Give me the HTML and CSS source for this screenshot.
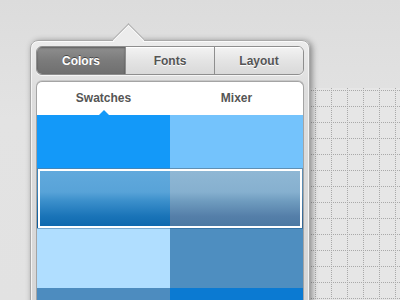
FILE: index.html
```html
<!DOCTYPE html>
<html lang="en">
<head>
    <meta charset="UTF-8">
    <meta name="viewport" content="width=device-width, initial-scale=1.0">
    <title>Color Picker</title>
    <link rel="stylesheet" href="styles.css">
</head>
<body>

<div class="desk">
    <div class="canvas">
        <svg class="grid" width="100%" height="100%">
            <defs>
                <pattern id="dots" x="9" y="2" width="16" height="16" patternUnits="userSpaceOnUse">
                    <path d="M0 0.5H16M0.5 0V16" stroke="#a9a9a9" stroke-width="1" stroke-dasharray="1 1" fill="none"/>
                </pattern>
            </defs>
            <rect width="100%" height="100%" fill="url(#dots)"/>
        </svg>
    </div>

    <div class="popover">
        <div class="segmented">
            <div class="seg active">Colors</div>
            <div class="seg">Fonts</div>
            <div class="seg">Layout</div>
        </div>

        <div class="picker">
            <div class="tabs">
                <div class="tab active">Swatches</div>
                <div class="tab">Mixer</div>
            </div>
            <div class="swatches">
                <div class="row first">
                    <div class="swatch" style="background:#1399f9"></div>
                    <div class="swatch" style="background:#74c3fc"></div>
                </div>
                <div class="row selected">
                    <div class="swatch sel-left"></div>
                    <div class="swatch sel-right"></div>
                </div>
                <div class="row">
                    <div class="swatch" style="background:#b0deff"></div>
                    <div class="swatch" style="background:#4e8ec0"></div>
                </div>
                <div class="row">
                    <div class="swatch" style="background:#4d8cbf"></div>
                    <div class="swatch" style="background:#0b7ad2"></div>
                </div>
            </div>
        </div>
    </div>
</div>

</body>
</html>
```

FILE: styles.css
```css
body {
    margin: 0;
    background: #e1e1e1;
    font-family: "Liberation Sans", Arial, sans-serif;
}
.desk {
    position: relative;
    width: 400px;
    height: 300px;
    overflow: hidden;
    background: linear-gradient(#dcdcdc, #e3e3e3 120px, #e2e2e2);
}

/* dotted canvas behind the popover */
.canvas {
    margin: 88px 0 0 306px;
    height: 212px;
    background: #e6e6e6;
}
.grid { display: block; }

/* popover */
.popover {
    position: absolute;
    left: 30px;
    top: 40px;
    width: 280px;
    height: 290px;
    border: 1px solid #a9a9a9;
    border-radius: 8px;
    background: linear-gradient(#ececec, #dddddd 50px, #d6d6d6);
    box-shadow: inset 0 1px 0 #fafafa, inset 1px 0 0 #f4f4f4, inset -1px 0 0 #f4f4f4, 2px 1px 6px rgba(0,0,0,0.42);
    padding: 5px 5px 0;
    box-sizing: border-box;
}
.popover::before {
    content: "";
    position: absolute;
    left: 86px;
    top: -13px;
    width: 22px;
    height: 22px;
    background: #ececec;
    border-left: 1px solid #adadad;
    border-top: 1px solid #adadad;
    box-shadow: inset 1px 1px 0 #fbfbfb;
    transform: rotate(45deg);
}

.segmented {
    position: relative;
    display: flex;
    height: 29px;
    border: 1px solid #8e8e8e;
    border-radius: 6px;
    overflow: hidden;
    box-sizing: border-box;
    box-shadow: 0 1px 0 #f5f5f5;
}
.seg {
    flex: 1;
    display: flex;
    align-items: center;
    justify-content: center;
    font-size: 12px;
    font-weight: 700;
    color: #555555;
    text-shadow: 0 1px 0 #ffffff;
    background: linear-gradient(#f3f3f3, #e4e4e4 50%, #d9d9d9);
    border-left: 1px solid #8e8e8e;
    box-shadow: inset 0 1px 0 #ffffff;
}
.seg:first-child { border-left: none; }
.seg.active {
    color: #ffffff;
    text-shadow: 0 -1px 0 rgba(0,0,0,0.45);
    background: linear-gradient(#8f8f8f, #7b7b7b 50%, #6f6f6f);
    box-shadow: inset 0 1px 2px rgba(0,0,0,0.35);
}

.picker {
    margin-top: 6px;
    border: 1px solid #a4a4a4;
    border-bottom: none;
    border-radius: 6px 6px 0 0;
    overflow: hidden;
    background: #ffffff;
    box-shadow: 0 -1px 0 #c8c8c8;
}
.tabs {
    display: flex;
    height: 33px;
}
.tab {
    position: relative;
    flex: 1;
    display: flex;
    align-items: center;
    justify-content: center;
    padding-bottom: 1px;
    font-size: 12px;
    font-weight: 700;
    color: #555555;
}
.tab.active::after {
    content: "";
    position: absolute;
    left: 50%;
    bottom: 0;
    margin-left: -5px;
    border: 5px solid transparent;
    border-top: none;
    border-bottom-color: #1399f9;
}

.swatches { display: flex; flex-direction: column; }
.row { display: flex; height: 60px; }
.row.first { height: 53px; }
.swatch { flex: 1; }
.row.selected { position: relative; }
.row.selected::after {
    content: "";
    position: absolute;
    top: 1px;
    left: 1px;
    right: 1px;
    bottom: 0;
    border: 2px solid #ffffff;
    box-shadow: 0 0 0 1px rgba(10,70,120,0.35);
}
.sel-left {
    background: linear-gradient(#62aadd, #58a3d8 40%, #3b8fcb 55%, #1a74b8 80%, #0c67ad);
}
.sel-right {
    background: linear-gradient(#90b8d5, #86b0cf 40%, #6f9cbf 55%, #557fa9 80%, #4a78a2);
}
```
